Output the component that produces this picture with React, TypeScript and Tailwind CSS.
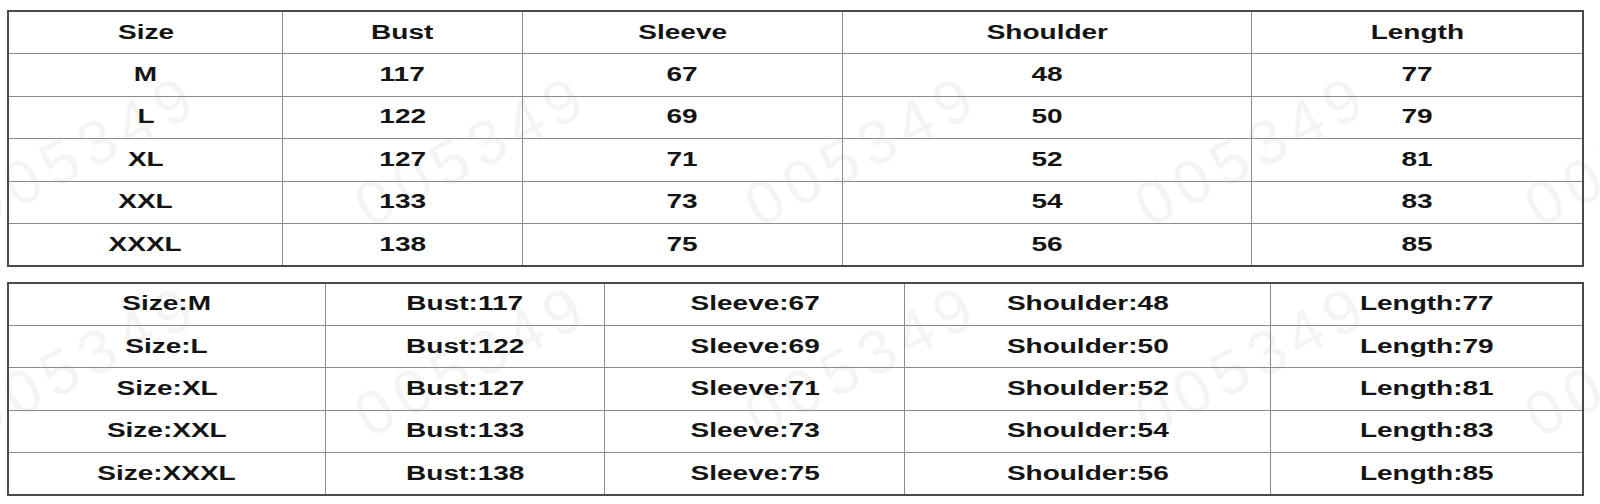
const sizes = ["M", "L", "XL", "XXL", "XXXL"];
const bust = [117, 122, 127, 133, 138];
const sleeve = [67, 69, 71, 73, 75];
const shoulder = [48, 50, 52, 54, 56];
const length = [77, 79, 81, 83, 85];

const headers = ["Size", "Bust", "Sleeve", "Shoulder", "Length"];

const wideCols = ["w-[275px]", "w-[240px]", "w-[320px]", "w-[410px]", "w-[331.5px]"];
const labelCols = ["w-[317.5px]", "w-[280px]", "w-[300px]", "w-[366px]", "w-[313px]"];

const marks = [75, 465, 855, 1245, 1635];

function Stretch({ children }: { children: React.ReactNode }) {
  return <span className="relative -top-[1px] inline-block scale-x-[1.4]">{children}</span>;
}

function Watermarks({ top }: { top: string }) {
  return (
    <>
      {marks.map((x) => (
        <span
          key={x}
          aria-hidden="true"
          className={`pointer-events-none absolute ${top} -translate-x-1/2 -translate-y-1/2 -rotate-[28deg] select-none text-[62px] font-normal tracking-[8px] text-[#f4f4f4]`}
          style={{ left: x }}
        >
          005349
        </span>
      ))}
    </>
  );
}

export default function App() {
  const rows = sizes.map((s, i) => [s, bust[i], sleeve[i], shoulder[i], length[i]]);

  return (
    <div className="h-[504px] w-[1600px] overflow-hidden bg-white pl-[7px] pt-[10px] font-['Liberation_Sans',Arial,sans-serif] text-[20px] font-bold text-[#141414]">
      {/* Plain size chart */}
      <div className="relative w-[1577px]">
        <Watermarks top="top-[140px]" />
        <table className="relative table-fixed border-collapse border-2 border-[#4a4a4a]">
          <colgroup>
            {wideCols.map((c) => (
              <col key={c} className={c} />
            ))}
          </colgroup>
          <tbody>
            <tr className="h-[42.5px]">
              {headers.map((h) => (
                <td key={h} className="border border-[#8c8c8c] p-0 text-center leading-none">
                  <Stretch>{h}</Stretch>
                </td>
              ))}
            </tr>
            {rows.map((r) => (
              <tr key={r[0]} className="h-[42.5px]">
                {r.map((v, j) => (
                  <td key={j} className="border border-[#8c8c8c] p-0 text-center leading-none">
                    <Stretch>{v}</Stretch>
                  </td>
                ))}
              </tr>
            ))}
          </tbody>
        </table>
      </div>

      {/* Labelled size chart */}
      <div className="relative mt-[15px] w-[1577px]">
        <Watermarks top="top-[78px]" />
        <table className="relative table-fixed border-collapse border-2 border-[#4a4a4a]">
          <colgroup>
            {labelCols.map((c) => (
              <col key={c} className={c} />
            ))}
          </colgroup>
          <tbody>
            {rows.map((r) => (
              <tr key={r[0]} className="h-[42.4px]">
                {r.map((v, j) => (
                  <td key={j} className="border border-[#8c8c8c] p-0 text-center leading-none">
                    <Stretch>
                      {headers[j]}:{v}
                    </Stretch>
                  </td>
                ))}
              </tr>
            ))}
          </tbody>
        </table>
      </div>
    </div>
  );
}
